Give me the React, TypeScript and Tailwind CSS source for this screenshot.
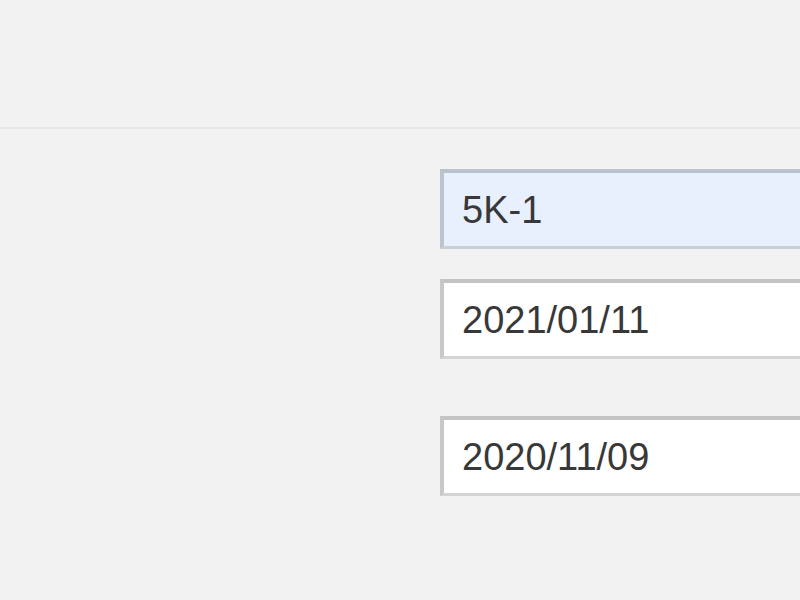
export default function App() {
	const fields = [
		{ value: '5K-1', filled: true, mt: 'mt-[40px]' },
		{ value: '2021/01/11', filled: false, mt: 'mt-[30px]' },
		{ value: '2020/11/09', filled: false, mt: 'mt-[57px]' },
	];

	return (
		<div className="w-[800px] h-[600px] overflow-hidden bg-[#f2f2f2] font-['Liberation_Sans',Arial,sans-serif]">
			<div className="h-[129px] border-b-2 border-[#e6e6e6]" />
			<div className="pl-[440px]">
				{fields.map((f) => (
					<div
						key={f.value}
						className={`${f.mt} h-[80px] w-[400px] flex items-center pl-[18px] border-[3px] border-t-4 border-l-4 ${
							f.filled
								? 'bg-[#e8f0fe] border-[#c9cfd6] border-t-[#b9c3cd] border-l-[#bcc5ce]'
								: 'bg-white border-[#d4d4d4] border-t-[#c4c4c4] border-l-[#c8c8c8]'
						}`}
					>
						<span className="text-[38px] text-[#383838] leading-none">{f.value}</span>
					</div>
				))}
			</div>
		</div>
	);
}
